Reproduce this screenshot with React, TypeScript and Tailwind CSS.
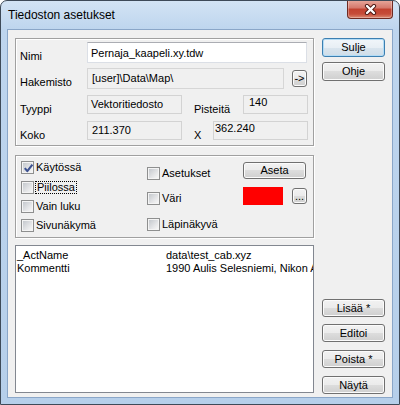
import React from "react";

function Btn({
  children,
  className = "",
  def = false,
}: {
  children: React.ReactNode;
  className?: string;
  def?: boolean;
}) {
  return (
    <div
      className={`flex shrink-0 items-center justify-center rounded-[3px] border text-[11px] leading-[13px] text-black ${
        def
          ? "border-[#3c7fb1] bg-[linear-gradient(#f1f6fa_0%,#e8eff5_50%,#dae5ee_50%,#cfdde8_100%)] shadow-[inset_0_0_0_1px_#b3dcf6]"
          : "border-[#707070] bg-[linear-gradient(#f2f2f2_0%,#ebebeb_50%,#dddddd_50%,#cfcfcf_100%)] shadow-[inset_0_0_0_1px_#fbfbfb]"
      } ${className}`}
    >
      {children}
    </div>
  );
}

function Check({ checked = false }: { checked?: boolean }) {
  return (
    <div className="relative h-[13px] w-[13px] shrink-0 border border-[#8e8f8f] bg-[#f4f4f4] p-[1px]">
      <div className="h-full w-full bg-[linear-gradient(135deg,#c4c8cd_0%,#e4e5e7_60%,#f6f6f6_100%)]" />
      {checked && (
        <svg
          className="absolute left-[1px] top-[1px]"
          width="11"
          height="11"
          viewBox="0 0 11 11"
        >
          <path
            d="M1.8 5.2 L4.3 8.2 L9.4 1.6"
            fill="none"
            stroke="#3d5291"
            strokeWidth="2.1"
            strokeLinejoin="round"
          />
        </svg>
      )}
    </div>
  );
}

function CheckRow({
  label,
  checked,
  focus,
  className = "",
}: {
  label: string;
  checked?: boolean;
  focus?: boolean;
  className?: string;
}) {
  return (
    <div className={`flex items-center ${className}`}>
      <Check checked={checked} />
      {focus ? (
        <span className="ml-[1px] border border-dotted border-black px-[1px] leading-[11px]">
          {label}
        </span>
      ) : (
        <span className="ml-[2px]">{label}</span>
      )}
    </div>
  );
}

export default function App() {
  return (
    <div className="h-[405px] w-[400px] overflow-hidden rounded-t-[7px] border border-[#3e4a58] bg-[linear-gradient(#d3e3f4_0px,#bed5ee_28px,#b6cfea_100%)] font-['Liberation_Sans',Arial,sans-serif] text-[11px] leading-[13px] text-black">
      {/* Title bar */}
      <div className="flex h-[28px] justify-between pl-[7px] pr-[6px]">
        <div className="flex items-center text-[12px] leading-[14px]">
          Tiedoston asetukset
        </div>
        <div className="-mt-[1px] flex h-[19px] w-[46px] items-center justify-center self-start rounded-b-[4px] border border-t-0 border-[#6e2a22] bg-[linear-gradient(#e9aa9e_0%,#d5776a_45%,#c2412f_50%,#c64c39_78%,#dc8a72_100%)] shadow-[inset_0_0_0_1px_rgba(255,255,255,0.3)]">
          <svg width="13" height="11" viewBox="0 0 13 11">
            <path
              d="M3 2 L10 9 M10 2 L3 9"
              stroke="#4c1711"
              strokeWidth="4.2"
              strokeLinecap="round"
            />
            <path
              d="M3 2 L10 9 M10 2 L3 9"
              stroke="#ffffff"
              strokeWidth="2.4"
              strokeLinecap="round"
            />
          </svg>
        </div>
      </div>

      {/* Client area */}
      <div className="mx-[6px] h-[369px] border border-[#8aa6c8] bg-[#f0f0f0]">
        <div className="flex gap-[8px] px-[7px] pt-[8px]">
          {/* Left column */}
          <div className="flex w-[299px] flex-col">
            {/* File info group */}
            <div className="h-[108px] border border-[#a0a0a0] pl-[4px] pt-[3px] shadow-[inset_1px_1px_0_#fff,1px_1px_0_#fff]">
              <div className="flex h-[21px]">
                <div className="w-[67px] pt-[8px]">Nimi</div>
                <div className="h-[21px] w-[220px] border border-[#dbdfe6] border-t-[#abadb3] bg-white pl-[3px] pt-[4px]">
                  Pernaja_kaapeli.xy.tdw
                </div>
              </div>
              <div className="mt-[5px] flex h-[21px]">
                <div className="w-[67px] pt-[8px]">Hakemisto</div>
                <div className="h-[21px] w-[197px] border border-[#d6d6d6] bg-[#f0f0f0] pl-[4px] pt-[3px]">
                  [user]\Data\Map\
                </div>
                <Btn className="ml-[8px] mt-[2px] h-[17px] w-[15px] rounded-[2px]">
                  {"->"}
                </Btn>
              </div>
              <div className="mt-[6px] flex h-[19px]">
                <div className="w-[67px] pt-[8px]">Tyyppi</div>
                <div className="h-[19px] w-[95px] border border-[#d3d3d3] pl-[3px] pt-[2px]">
                  Vektoritiedosto
                </div>
                <div className="ml-[12px] w-[49px] pt-[8px]">Pisteitä</div>
                <div className="h-[19px] w-[65px] border border-[#d3d3d3] pl-[5px]">
                  140
                </div>
              </div>
              <div className="mt-[7px] flex h-[19px]">
                <div className="w-[67px] pt-[8px]">Koko</div>
                <div className="h-[19px] w-[95px] border border-[#d3d3d3] pl-[4px] pt-[2px]">
                  211.370
                </div>
                <div className="ml-[12px] w-[19px] pt-[8px]">X</div>
                <div className="h-[19px] w-[95px] border border-[#d3d3d3] pl-[1px]">
                  362.240
                </div>
              </div>
            </div>

            {/* Options group */}
            <div className="mt-[9px] flex h-[83px] border border-[#a0a0a0] pl-[5px] shadow-[inset_1px_1px_0_#fff,1px_1px_0_#fff]">
              <div className="flex w-[126px] flex-col pt-[2px]">
                <CheckRow className="h-[19px]" label="Käytössä" checked />
                <CheckRow className="h-[20px]" label="Piilossa" focus />
                <CheckRow className="h-[19px]" label="Vain luku" />
                <CheckRow className="h-[19px]" label="Sivunäkymä" />
              </div>
              <div className="flex w-[96px] flex-col pt-[5px]">
                <CheckRow className="h-[26px]" label="Asetukset" />
                <CheckRow className="h-[25px]" label="Väri" />
                <CheckRow className="h-[26px]" label="Läpinäkyvä" />
              </div>
              <div className="flex w-[64px] flex-col pt-[6px]">
                <Btn className="h-[17px] w-[63px]">Aseta</Btn>
                <div className="mt-[8px] flex">
                  <div className="h-[18px] w-[40px] bg-[#ff0000]" />
                  <Btn className="ml-[9px] mt-[1px] h-[16px] w-[15px] rounded-[2px] leading-[8px]">
                    ...
                  </Btn>
                </div>
              </div>
            </div>

            {/* Attribute list */}
            <div className="mt-[7px] h-[148px] overflow-hidden border border-[#828790] bg-white pl-[1px] pt-[3px]">
              <div className="flex whitespace-nowrap">
                <div className="w-[149px] shrink-0">_ActName</div>
                <div>data\test_cab.xyz</div>
              </div>
              <div className="flex whitespace-nowrap">
                <div className="w-[149px] shrink-0">Kommentti</div>
                <div>1990 Aulis Selesniemi, Nikon A-</div>
              </div>
            </div>
          </div>

          {/* Right column buttons */}
          <div className="flex h-[356px] w-[63px] flex-col">
            <Btn def className="h-[19px]">
              Sulje
            </Btn>
            <Btn className="mt-[5px] h-[19px]">Ohje</Btn>
            <div className="flex-1" />
            <Btn className="h-[18px]">Lisää *</Btn>
            <Btn className="mt-[7px] h-[18px]">Editoi</Btn>
            <Btn className="mt-[8px] h-[18px]">Poista *</Btn>
            <Btn className="mt-[8px] h-[18px]">Näytä</Btn>
          </div>
        </div>
      </div>
    </div>
  );
}
